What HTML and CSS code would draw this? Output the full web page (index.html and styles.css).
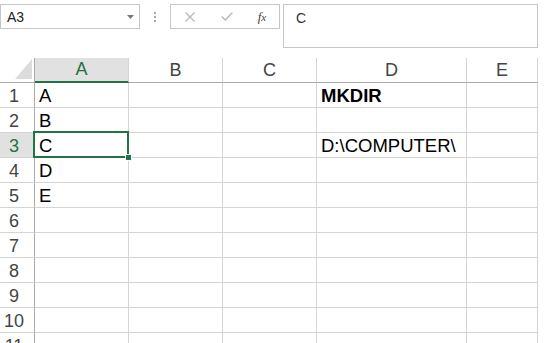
FILE: index.html
```html
<!DOCTYPE html>
<html>
<head>
<meta charset="utf-8">
<link rel="stylesheet" href="styles.css">
</head>
<body>
<div class="fbar">
  <div class="namebox">
    <span class="nb-text">A3</span>
    <svg class="nb-arrow" width="7" height="4" viewBox="0 0 7 4"><path d="M0 0H7L3.5 4Z" fill="#7a7a7a"/></svg>
  </div>
  <div class="dots"><i></i><i></i><i></i></div>
  <div class="btns">
    <span class="btn"><svg width="10" height="10" viewBox="0 0 10 10"><path d="M0.5 0.5L9.5 9.5M9.5 0.5L0.5 9.5" stroke="#b8b8b8" stroke-width="1.3" fill="none"/></svg></span>
    <span class="btn"><svg width="12" height="9" viewBox="0 0 12 9"><path d="M0.7 4.6L4.2 8L11.3 0.8" stroke="#b8b8b8" stroke-width="1.4" fill="none"/></svg></span>
    <span class="btn fx">f<span class="fx-x">x</span></span>
  </div>
  <div class="finput">C</div>
</div>

<div class="sheet">
  <div class="corner"><svg width="17" height="20" viewBox="0 0 17 20"><path d="M17 0V20H0Z" fill="#dcdcdc"/></svg></div>
  <div class="ch sel-col">A</div>
  <div class="ch">B</div>
  <div class="ch">C</div>
  <div class="ch">D</div>
  <div class="ch">E</div>

  <div class="rh">1</div><div class="c">A</div><div class="c"></div><div class="c"></div><div class="c bold">MKDIR</div><div class="c"></div>
  <div class="rh">2</div><div class="c">B</div><div class="c"></div><div class="c"></div><div class="c"></div><div class="c"></div>
  <div class="rh sel-row">3</div><div class="c active">C<span class="sel"><span class="handle"></span></span></div><div class="c"></div><div class="c"></div><div class="c">D:\COMPUTER\</div><div class="c"></div>
  <div class="rh">4</div><div class="c">D</div><div class="c"></div><div class="c"></div><div class="c"></div><div class="c"></div>
  <div class="rh">5</div><div class="c">E</div><div class="c"></div><div class="c"></div><div class="c"></div><div class="c"></div>
  <div class="rh">6</div><div class="c"></div><div class="c"></div><div class="c"></div><div class="c"></div><div class="c"></div>
  <div class="rh">7</div><div class="c"></div><div class="c"></div><div class="c"></div><div class="c"></div><div class="c"></div>
  <div class="rh">8</div><div class="c"></div><div class="c"></div><div class="c"></div><div class="c"></div><div class="c"></div>
  <div class="rh">9</div><div class="c"></div><div class="c"></div><div class="c"></div><div class="c"></div><div class="c"></div>
  <div class="rh">10</div><div class="c"></div><div class="c"></div><div class="c"></div><div class="c"></div><div class="c"></div>
  <div class="rh">11</div><div class="c"></div><div class="c"></div><div class="c"></div><div class="c"></div><div class="c"></div>
</div>
</body>
</html>
```

FILE: styles.css
```css
html, body {
  margin: 0;
  padding: 0;
  background: #ffffff;
  width: 550px;
  height: 343px;
  overflow: hidden;
  font-family: "Liberation Sans", Arial, sans-serif;
}

.fbar {
  display: flex;
  align-items: flex-start;
  padding-top: 4px;
  height: 44px;
}

.namebox {
  box-sizing: border-box;
  width: 140px;
  height: 25px;
  border: 1px solid #c6c6c6;
  display: flex;
  align-items: center;
  justify-content: space-between;
  padding: 0 5px 0 6px;
  font-size: 14px;
  color: #222;
}

.nb-text {
  padding-top: 1px;
}

.nb-arrow {
  margin-top: 1px;
}

.dots {
  width: 30px;
  height: 25px;
  display: flex;
  flex-direction: column;
  align-items: center;
  justify-content: center;
  gap: 2px;
}

.dots i {
  display: block;
  width: 2px;
  height: 2px;
  background: #a8a8a8;
}

.btns {
  box-sizing: border-box;
  width: 110px;
  height: 25px;
  border: 1px solid #c6c6c6;
  display: flex;
  align-items: center;
}

.btn {
  width: 38px;
  display: flex;
  justify-content: center;
  align-items: center;
}

.btn:first-child {
  width: 37px;
}

.fx {
  width: 32px;
  font-family: "Liberation Serif", "Times New Roman", serif;
  font-style: italic;
  font-size: 13px;
  color: #444;
  align-items: baseline;
}

.fx-x {
  font-size: 11px;
}

.finput {
  box-sizing: border-box;
  margin-left: 3px;
  width: 255px;
  height: 44px;
  border: 1px solid #c6c6c6;
  padding: 5px 0 0 12px;
  font-size: 14px;
  color: #333;
}

.sheet {
  margin-top: 10px;
  display: grid;
  grid-template-columns: 35px 94px 94px 94px 150px 71px;
  grid-auto-rows: 25px;
  height: 285px;
  overflow: hidden;
  width: 538px;
}

.sheet > div {
  box-sizing: border-box;
}

.corner {
  border-right: 1px solid #ababab;
  border-bottom: 1px solid #ababab;
  display: flex;
  justify-content: flex-end;
  align-items: flex-end;
  padding: 0 2px 3px 0;
}

.corner svg {
  display: block;
}

.ch {
  border-right: 1px solid #d4d4d4;
  border-bottom: 1px solid #ababab;
  text-align: center;
  font-size: 18px;
  line-height: 24px;
  color: #444;
}

.ch.sel-col {
  background: #e1e1e1;
  color: #217346;
  border-bottom: 2px solid #217346;
  line-height: 23px;
}

.rh {
  border-right: 1px solid #ababab;
  border-bottom: 1px solid #d4d4d4;
  text-align: center;
  padding: 2px 6px 0 0;
  font-size: 18px;
  line-height: 22px;
  color: #444;
}

.rh.sel-row {
  background: #e1e1e1;
  color: #217346;
}

.c {
  border-right: 1px solid #d4d4d4;
  border-bottom: 1px solid #d4d4d4;
  padding: 2px 0 0 4px;
  font-size: 18.5px;
  line-height: 22px;
  color: #000;
  white-space: nowrap;
}

.c.bold {
  font-weight: bold;
}

.c.active {
  position: relative;
}

.sel {
  position: absolute;
  top: -2px;
  left: -2px;
  right: -1px;
  bottom: -1px;
  border: 2px solid #217346;
}

.handle {
  position: absolute;
  right: -5px;
  bottom: -5px;
  width: 5px;
  height: 5px;
  background: #217346;
  border: 1px solid #ffffff;
}
```
